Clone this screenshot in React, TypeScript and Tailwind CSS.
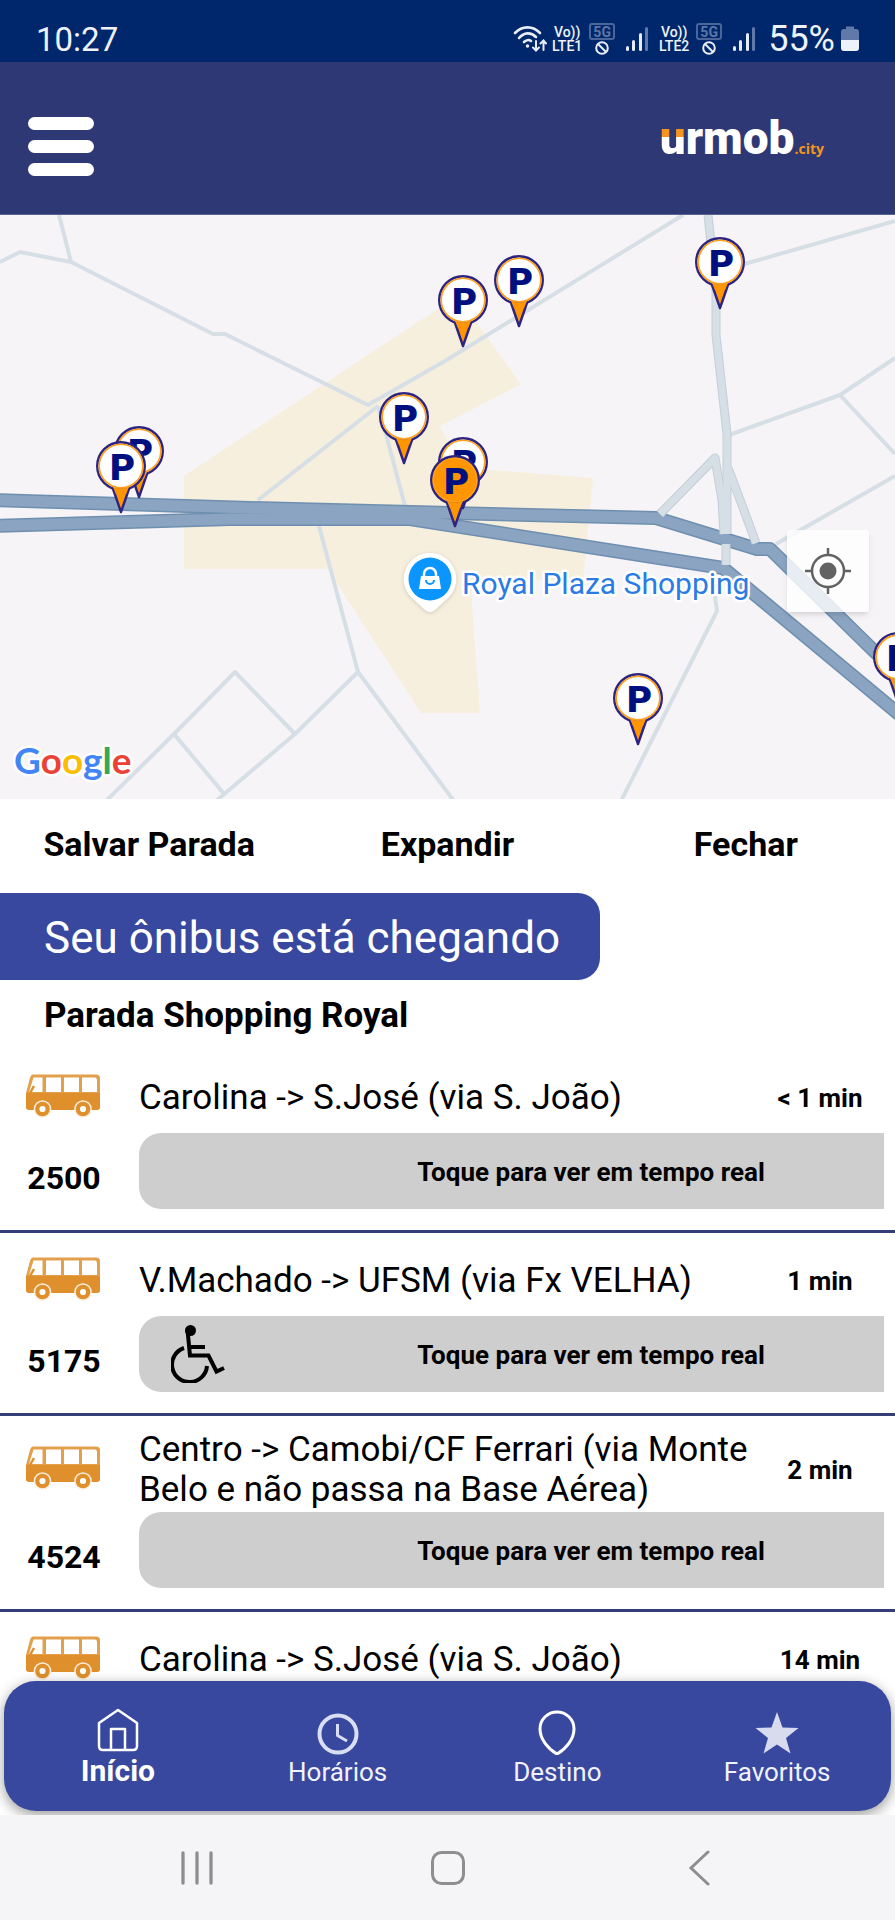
import type { FC, ReactNode } from 'react';
import clsx from 'clsx';

interface Arrival {
  id: string;
  code: string;
  route: string;
  eta: string;
  accessible?: boolean;
}

interface StopPin {
  x: number;
  y: number;
  active?: boolean;
}

const ARRIVALS: Arrival[] = [
  { id: 'a1', code: '2500', route: 'Carolina -> S.José (via S. João)', eta: '< 1 min' },
  { id: 'a2', code: '5175', route: 'V.Machado -> UFSM (via Fx VELHA)', eta: '1 min', accessible: true },
  {
    id: 'a3',
    code: '4524',
    route: 'Centro -> Camobi/CF Ferrari (via Monte Belo e não passa na Base Aérea)',
    eta: '2 min',
  },
];

const NEXT_ARRIVAL = { route: 'Carolina -> S.José (via S. João)', eta: '14 min' };

// centre of each pin's disc, later pins cover earlier ones
const PINS: StopPin[] = [
  { x: 139, y: 451 },
  { x: 121, y: 466 },
  { x: 404, y: 417 },
  { x: 463, y: 300 },
  { x: 519, y: 280 },
  { x: 720, y: 262 },
  { x: 463, y: 462 },
  { x: 455, y: 480, active: true },
  { x: 638, y: 698 },
  { x: 898, y: 657 },
];

const STREETS = [
  'M0 262 L20 252 L71 262 L213 334 H225 L368 405 L445 361 L683 215',
  'M59 215 L71 262',
  'M378 406 L258 500',
  'M378 406 L387 438 L405 506',
  'M319 526 L358 672 L295 734 L216 801',
  'M358 672 L454 801',
  'M295 734 L235 672 L174 734 L106 801',
  'M174 734 L225 795',
  'M720 271 L895 221',
  'M729 435 L840 395 L895 358',
  'M840 395 L895 454',
  'M776 544 L895 476',
  'M714 590 L717 611 L621 801',
];

const AVENUES = [
  'M708 215 L716 290 V335 L727 434 V534',
  'M660 514 L715 458 L722 500 L724 534',
  'M728 468 L742 505 L756 543',
  'M726 544 V565',
];

const HIGHWAYS = [
  'M-5 500 L250 508 L450 513 L656 518 L757 549 H770 L873 650 L900 675',
  'M-5 526 L230 519 H410 L723 568 L900 715',
];

const WifiIcon = () => (
  <svg viewBox="0 0 34 28" className="h-7 w-[34px]" fill="none" stroke="#e8edf6" strokeWidth="2.6" strokeLinecap="round">
    <path d="M2 8 C9 0.500 20 0.500 27 8" />
    <path d="M6 13 C11 7 18 7 23 12" />
    <path d="M11 17 C13 15 16 14.500 18 16" />
    <circle cx="14.500" cy="21" r="1" fill="#e8edf6" strokeWidth="1.500" />
    <path d="M23 16 V25 M20 22.500 L23 25.500 L26 22.500 M30.500 25 V16 M27.500 18.500 L30.500 15.500 L33 18.500" strokeWidth="2" />
  </svg>
);

const SignalIcon = () => (
  <svg viewBox="0 0 24 26" className="h-[26px] w-6">
    <rect x="1" y="20" width="3" height="5" rx="1.500" fill="#e8edf6" />
    <rect x="7" y="14" width="3" height="11" rx="1.500" fill="#e8edf6" />
    <rect x="14" y="7" width="3" height="18" rx="1.500" fill="#e8edf6" />
    <rect x="20" y="1" width="3" height="24" rx="1.500" fill="#6079a8" />
  </svg>
);

const SimStatus: FC<{ slot: string }> = ({ slot }) => (
  <div className="flex items-center">
    <div className="flex w-8 flex-col items-center text-sm/[14px] font-medium">
      <span>Vo))</span>
      <span>LTE{slot}</span>
    </div>
    <div className="ml-1.5 flex w-[26px] flex-col items-center gap-px">
      <span className="flex h-[17px] w-[26px] items-center justify-center rounded-[3px] border-2 border-[#4a659a] text-sm/[14px] font-bold text-[#5d76a5]">
        5G
      </span>
      <svg viewBox="0 0 14 14" className="h-3.5 w-3.5" fill="none" stroke="#e8edf6" strokeWidth="2">
        <circle cx="7" cy="7" r="5.800" />
        <path d="M3 3 L11 11" />
      </svg>
    </div>
    <div className="ml-2.5">
      <SignalIcon />
    </div>
  </div>
);

const StatusBar = () => (
  <div className="flex h-[62px] items-center justify-between bg-[#00276b] pr-9 pl-9 text-[#eef2f9]">
    <span className="pt-4 text-[33px]/[33px]">10:27</span>
    <div className="flex items-center pt-4">
      <WifiIcon />
      <div className="ml-1 flex items-center gap-[9px]">
        <SimStatus slot="1" />
        <SimStatus slot="2" />
      </div>
      <span className="mr-1.5 ml-3 text-[36px]/[36px]">55%</span>
      <svg viewBox="0 0 18 26" className="h-[26px] w-[18px]">
        <path d="M0 6 Q0 3 3 3 H5 V0.500 H13 V3 H15 Q18 3 18 6 V14 H0 Z" fill="#6079a8" />
        <path d="M0 14 H18 V22 Q18 25 15 25 H3 Q0 25 0 22 Z" fill="#eef2f9" />
      </svg>
    </div>
  </div>
);

const Header = () => (
  <header className="flex h-[153px] items-start justify-between border-b border-[#5a6290] bg-[#2d3875] pt-[55px] pr-[71px] pl-7">
    <button type="button" aria-label="Menu" className="flex w-[66px] flex-col gap-2.5">
      <span className="h-[13px] w-full rounded-full bg-white" />
      <span className="h-[13px] w-full rounded-full bg-white" />
      <span className="h-[13px] w-full rounded-full bg-white" />
    </button>
    <a href="#inicio" className="flex items-baseline text-[46px]/[42px] font-black text-white">
      <span className="bg-linear-to-b from-[#f7941d] from-[20px] to-white to-[20px] bg-clip-text text-transparent">u</span>
      <span>rmob</span>
      <span className="font-['Open_Sans',sans-serif] text-sm/[14px] font-bold text-[#f7941d]">.city</span>
    </a>
  </header>
);

const Pin: FC<StopPin> = ({ x, y, active }) => (
  <g transform={`translate(${x} ${y})`}>
    <path
      d="M-9 20 L0 46 L9 20 Z"
      fill="#ff9500"
      stroke="#2d2382"
      strokeWidth="2.400"
      strokeLinejoin="round"
    />
    <circle r="23.800" fill={active ? '#ff9500' : '#ffffff'} stroke="#2d2382" strokeWidth="2.400" />
    <circle r="21.800" fill="none" stroke="#ff9f1a" strokeWidth="1.600" />
    <path d="M-8 21 Q0 24 8 21 L5 28 H-5 Z" fill="#ff9500" />
    <text x="1" y="14" textAnchor="middle" className="font-['DejaVu_Sans',sans-serif] text-[36px] font-bold" fill="#00107f">
      P
    </text>
  </g>
);

const StopMap = () => (
  <section className="relative bg-[#f6f4f6]">
    <svg viewBox="0 215 895 584" className="block h-auto w-full" role="img" aria-label="Mapa de paradas">
      <path
        d="M184 476 L456 297 L478 325 L521 384 L440 426 L462 468 L492 470 L593 478 L583 580 H471 L472 606 L480 713 H421 L338 585 L328 569 H184 Z"
        fill="#f6efde"
      />
      <g fill="none" stroke="#d6dfe5" strokeWidth="4" strokeLinejoin="round">
        {STREETS.map((d) => (
          <path key={d} d={d} />
        ))}
      </g>
      <g fill="none" strokeLinejoin="round">
        {HIGHWAYS.map((d) => (
          <path key={d} d={d} stroke="#6f8fb0" strokeWidth="14" />
        ))}
        {HIGHWAYS.map((d) => (
          <path key={d} d={d} stroke="#8aa4c1" strokeWidth="11" />
        ))}
        {AVENUES.map((d) => (
          <path key={d} d={d} stroke="#c3cfd7" strokeWidth="9" />
        ))}
        {AVENUES.map((d) => (
          <path key={d} d={d} stroke="#d6dfe5" strokeWidth="7" />
        ))}
      </g>

      <path
        d="M430 553 a26 26 0 0 1 19 44 L435 610 Q430 614 425 610 L411 597 a26 26 0 0 1 19 -44 Z"
        fill="#ffffff"
        className="drop-shadow-sm"
      />
      <circle cx="430" cy="579" r="21.500" fill="#0a95ff" />
      <path d="M421 576 H439 L441 589 H419 Z" fill="#ffffff" />
      <path d="M424 577 V574 a6 6 0 0 1 12 0 V577" fill="none" stroke="#ffffff" strokeWidth="2.500" />
      <path d="M426 580 a4 4 0 0 0 8 0" fill="none" stroke="#0a95ff" strokeWidth="2" />
      <text
        x="462"
        y="594"
        className="text-[30px]"
        fill="#2b7be4"
        stroke="#ffffff"
        strokeWidth="5"
        strokeLinejoin="round"
        paintOrder="stroke"
      >
        Royal Plaza Shopping
      </text>

      {PINS.map((pin) => (
        <Pin key={`${pin.x}-${pin.y}`} {...pin} />
      ))}

      <text
        x="14"
        y="774"
        className="font-[Lato,sans-serif] text-[37px] font-bold"
        stroke="#ffffff"
        strokeWidth="5"
        strokeLinejoin="round"
        paintOrder="stroke"
      >
        <tspan fill="#4285f4">G</tspan>
        <tspan fill="#ea4335">o</tspan>
        <tspan fill="#fbbc05">o</tspan>
        <tspan fill="#4285f4">g</tspan>
        <tspan fill="#34a853">l</tspan>
        <tspan fill="#ea4335">e</tspan>
      </text>
    </svg>
    <button
      type="button"
      aria-label="Minha localização"
      className="absolute right-[26px] bottom-[187px] flex h-[82px] w-[82px] items-center justify-center rounded-[3px] bg-white/80 shadow-md"
    >
      <svg viewBox="0 0 48 48" className="h-12 w-12" fill="none" stroke="#626262" strokeWidth="2.500">
        <circle cx="24" cy="24" r="16" />
        <circle cx="24" cy="24" r="8.500" fill="#626262" stroke="none" />
        <path d="M24 1 V8 M24 40 V47 M1 24 H8 M40 24 H47" />
      </svg>
    </button>
  </section>
);

const BusIcon = () => (
  <svg viewBox="0 0 74 44" className="h-11 w-[74px]">
    <path
      d="M7 0.500 H70 Q74 0.500 74 4 V33 Q74 36 70 36 H4 Q0 36 0 33 V19 L4 4 Q5 0.500 7 0.500 Z"
      fill="#e3a04c"
    />
    <path d="M0 19 H74 V33 Q74 36 70 36 H4 Q0 36 0 33 Z" fill="#df8f2c" />
    <path d="M7.500 3.500 H16.500 V18 H3 Z" fill="#ffffff" />
    <path d="M20 3.500 H35 V18 H20 Z M38 3.500 H53 V18 H38 Z M56 3.500 H69 Q71 3.500 71 6 V18 H56 Z" fill="#ffffff" />
    <path d="M4 19 L8 12" stroke="#df8f2c" strokeWidth="2.500" />
    <circle cx="16.500" cy="35" r="8.800" fill="#fbeedd" />
    <circle cx="57" cy="35" r="8.800" fill="#fbeedd" />
    <circle cx="16.500" cy="35" r="5.200" fill="#ffffff" stroke="#df8f2c" strokeWidth="4.200" />
    <circle cx="57" cy="35" r="5.200" fill="#ffffff" stroke="#df8f2c" strokeWidth="4.200" />
  </svg>
);

const WheelchairIcon = () => (
  <svg viewBox="0 0 54 58" className="h-[58px] w-[54px]" fill="none" stroke="#000000" strokeWidth="4">
    <circle cx="19.500" cy="5.500" r="5.500" fill="#000000" stroke="none" />
    <path d="M16.500 5 L19 30.500 H37.500 L45.500 46.500 L53 43" />
    <path d="M18 22 H34" />
    <path d="M13 23 A17.500 17.500 0 1 0 36 41" />
  </svg>
);

const ArrivalSummary: FC<{ route: string; eta: string }> = ({ route, eta }) => (
  <div className="grid grid-cols-[139px_1fr_130px] items-center pt-3.5 pr-2.5 pb-0.5">
    <span className="pb-1 pl-[26px]">
      <BusIcon />
    </span>
    <p className="flex min-h-[67px] items-center text-[35px]/[40px]">{route}</p>
    <span className="text-center text-[26px]/[30px] font-bold">{eta}</span>
  </div>
);

const ArrivalRow: FC<{ arrival: Arrival }> = ({ arrival }) => (
  <li className="border-b-[3px] border-[#353d78] pb-[21px]">
    <ArrivalSummary route={arrival.route} eta={arrival.eta} />
    <div className="grid grid-cols-[128px_1fr] gap-x-[11px] pr-[11px]">
      <span className="pt-3.5 text-center text-[32px]/[62px] font-bold">{arrival.code}</span>
      <button
        type="button"
        className="grid h-[76px] grid-cols-[159px_1fr] items-center rounded-l-[22px] bg-[#cecece] text-[26px]/[30px] font-bold"
      >
        <span className="pl-8">{arrival.accessible ? <WheelchairIcon /> : null}</span>
        <span className="pt-0.5">Toque para ver em tempo real</span>
      </button>
    </div>
  </li>
);

const NavItem: FC<{ label: string; active?: boolean; children: ReactNode }> = ({ label, active, children }) => (
  <a href={`#${label}`} className="flex flex-1 flex-col items-center pt-[26px]">
    <svg viewBox="0 0 48 48" className="h-12 w-12" fill="none" stroke="#ffffff" strokeLinejoin="round">
      {children}
    </svg>
    <span className={clsx('leading-8', active ? 'text-[30px] font-bold' : 'pt-px text-[26px] text-[#f1f2fa]')}>
      {label}
    </span>
  </a>
);

const BottomNav = () => (
  <nav className="relative -mt-3.5 flex h-[130px] rounded-[32px] bg-[#38489f] px-1 text-white shadow-[0_4px_14px_rgba(0,0,0,0.4)]">
    <NavItem label="Início" active>
      <path d="M5 16 L24 3 L43 16 V39 Q43 43 39 43 H9 Q5 43 5 39 Z" strokeWidth="2.500" />
      <path d="M17 43 V22 H31 V43" strokeWidth="2.500" />
    </NavItem>
    <NavItem label="Horários">
      <circle cx="24" cy="27" r="18.500" stroke="#dadef2" strokeWidth="4" />
      <path d="M23.500 17 V28.500 L33 34" stroke="#dadef2" strokeWidth="3" />
    </NavItem>
    <NavItem label="Destino">
      <path d="M24 5 C33 5 41 12 41 22 C41 32 33 42 24 47 C15 42 7 32 7 22 C7 12 15 5 24 5 Z" strokeWidth="3" />
    </NavItem>
    <NavItem label="Favoritos">
      <path
        d="M24 5 L29.500 20.500 L45.500 21 L33 31 L37.500 46.500 L24 37.500 L10.500 46.500 L15 31 L2.500 21 L18.500 20.500 Z"
        fill="#d8dbee"
        stroke="none"
      />
    </NavItem>
  </nav>
);

const SystemNav = () => (
  <div className="relative grid h-[105px] grid-cols-3 place-items-center bg-[#f5f5f8] px-[71px] text-[#8e8e90]">
    <button type="button" aria-label="Recentes">
      <svg viewBox="0 0 36 36" className="h-9 w-9" stroke="currentColor" strokeWidth="3.300" strokeLinecap="round">
        <path d="M4 3 V33 M18 3 V33 M32 3 V33" />
      </svg>
    </button>
    <button type="button" aria-label="Tela inicial">
      <svg viewBox="0 0 36 36" className="h-9 w-9" fill="none" stroke="currentColor" strokeWidth="3">
        <rect x="2.500" y="2.500" width="31" height="31" rx="9" />
      </svg>
    </button>
    <button type="button" aria-label="Voltar">
      <svg viewBox="0 0 36 36" className="h-9 w-9" fill="none" stroke="currentColor" strokeWidth="3" strokeLinecap="round">
        <path d="M27 2 L10 18 L27 34" />
      </svg>
    </button>
  </div>
);

export default function App() {
  return (
    <div className="flex min-h-screen flex-col bg-white font-[Roboto,sans-serif] text-black">
      <StatusBar />
      <Header />
      <main className="flex-1">
        <StopMap />
        <div className="grid h-[94px] grid-cols-3 pb-1 text-[34px]/[40px] font-bold">
          <button type="button">Salvar Parada</button>
          <button type="button">Expandir</button>
          <button type="button">Fechar</button>
        </div>
        <h1 className="flex h-[87px] w-fit items-center rounded-r-[22px] bg-[#38489f] pt-0.5 pr-10 pl-11 text-[44px]/[52px] text-white">
          Seu ônibus está chegando
        </h1>
        <h2 className="px-11 pt-4 pb-3.5 text-[35px]/[40px] font-bold">Parada Shopping Royal</h2>
        <ul>
          {ARRIVALS.map((arrival) => (
            <ArrivalRow key={arrival.id} arrival={arrival} />
          ))}
          <li>
            <ArrivalSummary route={NEXT_ARRIVAL.route} eta={NEXT_ARRIVAL.eta} />
          </li>
        </ul>
      </main>
      <div className="overflow-x-clip px-1 pb-1">
        <BottomNav />
      </div>
      <SystemNav />
    </div>
  );
}
